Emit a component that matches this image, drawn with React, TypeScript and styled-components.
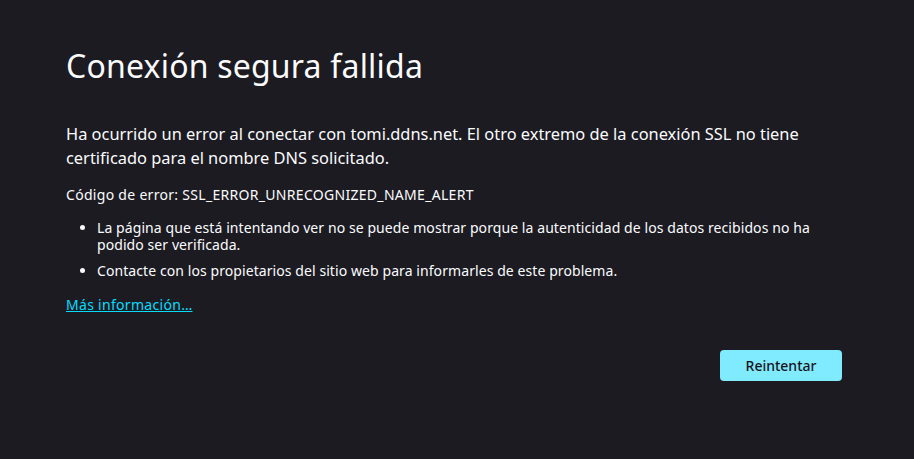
import React from "react";
import styled, { createGlobalStyle } from "styled-components";

const GlobalStyle = createGlobalStyle`
  html, body {
    margin: 0;
    padding: 0;
    background: #1c1b22;
  }
  body {
    font-family: "Noto Sans", "Open Sans", sans-serif;
    color: #fbfbfe;
  }
`;

const App: React.FC = () => {
  return (
    <Page>
      <GlobalStyle />
      <Container>
        <Title>Conexión segura fallida</Title>
        <Description>
          Ha ocurrido un error al conectar con tomi.ddns.net. El otro extremo
          de la conexión SSL no tiene certificado para el nombre DNS
          solicitado.
        </Description>
        <ErrorCode>Código de error: SSL_ERROR_UNRECOGNIZED_NAME_ALERT</ErrorCode>
        <List>
          <Item>
            La página que está intentando ver no se puede mostrar porque la
            autenticidad de los datos recibidos no ha podido ser verificada.
          </Item>
          <Item>
            Contacte con los propietarios del sitio web para informarles de
            este problema.
          </Item>
        </List>
        <MoreInfo href="#">Más información…</MoreInfo>
        <ButtonRow>
          <RetryButton>Reintentar</RetryButton>
        </ButtonRow>
      </Container>
    </Page>
  );
};

export default App;

const Page = styled.div`
  min-height: 459px;
  background: #1c1b22;
`;

const Container = styled.main`
  width: 776px;
  padding: 44px 0 0 66px;
  display: flex;
  flex-direction: column;
`;

const Title = styled.h1`
  margin: 0;
  font-size: 32px;
  font-weight: 400;
  line-height: 44px;
  letter-spacing: 0.2px;
`;

const Description = styled.p`
  margin: 34px 0 0;
  font-size: 16.4px;
  line-height: 24px;
`;

const ErrorCode = styled.p`
  margin: 16px 0 0;
  font-size: 14px;
  line-height: 18px;
  letter-spacing: 0.3px;
`;

const List = styled.ul`
  margin: 15px 0 0;
  padding-left: 31px;
  display: flex;
  flex-direction: column;
  gap: 9px;
`;

const Item = styled.li`
  font-size: 14px;
  line-height: 17px;
  letter-spacing: 0.08px;
  padding-right: 24px;
`;

const MoreInfo = styled.a`
  margin-top: 16.5px;
  align-self: flex-start;
  font-size: 14px;
  line-height: 18px;
  letter-spacing: 0.3px;
  color: #00ddff;
  text-decoration: underline;
`;

const ButtonRow = styled.div`
  display: flex;
  justify-content: flex-end;
  margin-top: 36px;
`;

const RetryButton = styled.button`
  width: 122px;
  height: 31px;
  border: none;
  border-radius: 4px;
  background: #80ebff;
  color: #15141a;
  font-family: "Noto Sans", "Open Sans", sans-serif;
  font-size: 14px;
  font-weight: 500;
  cursor: pointer;
`;
